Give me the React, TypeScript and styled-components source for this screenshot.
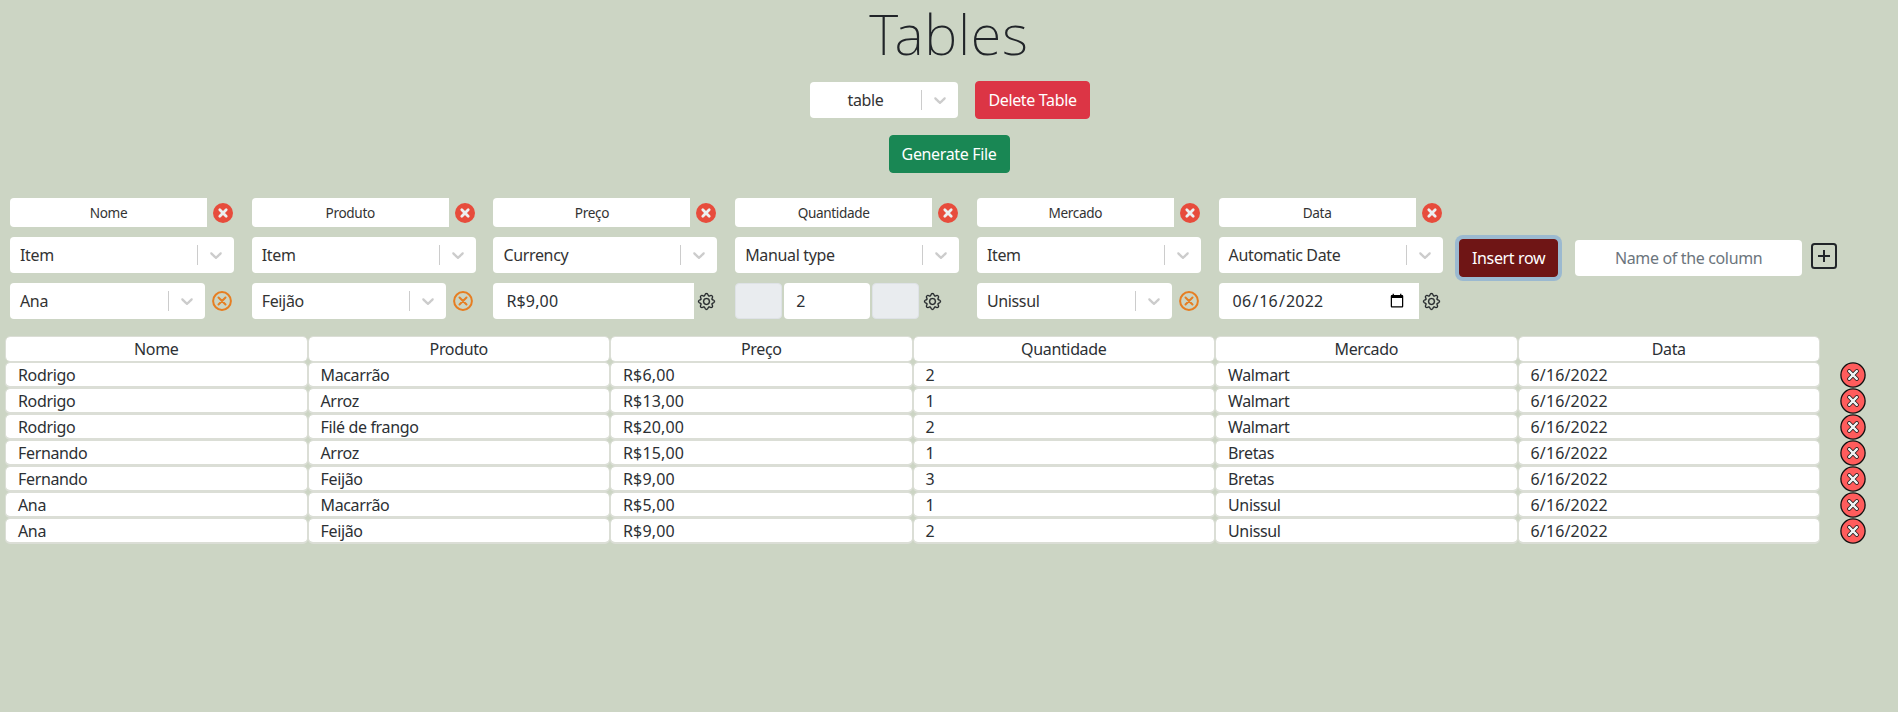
import React from "react";
import styled, { createGlobalStyle } from "styled-components";

const FONT = `"Noto Sans", "Open Sans", sans-serif`;

const Global = createGlobalStyle`
  html, body { margin: 0; padding: 0; background: #ccd5c4; }
  body { font-family: ${FONT}; color: #212529; font-size: 16px; letter-spacing: -0.35px; }
  input, button { letter-spacing: inherit; }
  * { box-sizing: border-box; }
`;

const Page = styled.div`
  width: 1898px;
  min-height: 712px;
  display: flex;
  flex-direction: column;
  background: #ccd5c4;
`;

const Title = styled.h1`
  margin: 0 0 15px;
  font-size: 56px;
  line-height: 66px;
  font-weight: 200;
  letter-spacing: 0.7px;
  text-align: center;
`;

const TopRow = styled.div`
  display: flex;
  justify-content: center;
  align-items: center;
  gap: 17px;
  height: 38px;
  padding-left: 2px;
`;

const GenerateRow = styled.div`
  display: flex;
  justify-content: center;
  margin-top: 16px;
`;

const Button = styled.button<{ $bg: string; $w: number }>`
  width: ${(p) => p.$w}px;
  height: 38px;
  padding: 0;
  border: 1px solid ${(p) => p.$bg};
  border-radius: 4px;
  background: ${(p) => p.$bg};
  color: #fff;
  font-family: ${FONT};
  font-size: 16px;
`;

const InsertButton = styled(Button)`
  margin-top: 2px;
  box-shadow: 0 0 0 4px #9bb9d0;
`;

const Builder = styled.div`
  display: flex;
  gap: 17.72px;
  margin-top: 25px;
  padding-left: 10px;
`;

const Column = styled.div`
  flex: 0 0 224px;
  display: flex;
  flex-direction: column;
  gap: 10px;
`;

const NameLine = styled.div`
  height: 29px;
  display: flex;
  align-items: center;
`;

const FieldLine = styled.div`
  height: 36px;
  display: flex;
  align-items: center;
`;

const NameInput = styled.input`
  width: 197px;
  height: 29px;
  flex: none;
  border: 0;
  outline: 0;
  border-radius: 4px 0 0 4px;
  background: #fff;
  color: #333;
  text-align: center;
  font-family: ${FONT};
  font-size: 13.6px;
`;

const SelectBox = styled.div<{ $w: number }>`
  width: ${(p) => p.$w}px;
  height: 36px;
  flex: none;
  display: flex;
  align-items: center;
  background: #fff;
  border-radius: 4px;
  color: #333;
  font-size: 16px;
`;

const SelectValue = styled.div<{ $center?: boolean }>`
  flex: 1;
  min-width: 0;
  padding-left: ${(p) => (p.$center ? 0 : 10)}px;
  text-align: ${(p) => (p.$center ? "center" : "left")};
  white-space: nowrap;
`;

const SelectSep = styled.span`
  width: 1px;
  height: 20px;
  background: #ccc;
  flex: none;
`;

const SelectArrow = styled.span`
  width: 36px;
  display: flex;
  align-items: center;
  justify-content: center;
  color: #ccc;
  flex: none;
`;

const TextInput = styled.input<{ $w: number }>`
  width: ${(p) => p.$w}px;
  height: 36px;
  flex: none;
  border: 0;
  outline: 0;
  background: #fff;
  border-radius: 4px 0 0 4px;
  padding: 0 12px 0 13px;
  color: #2c3034;
  font-family: ${FONT};
  font-size: 16px;
  letter-spacing: 0.15px;
`;

const StepButton = styled.span`
  width: 47px;
  height: 36px;
  flex: none;
  background: #e9ecef;
  border: 1px solid #dee2e6;
  border-radius: 4px;
`;

const StepInput = styled.input`
  width: 86px;
  height: 36px;
  flex: none;
  margin: 0 2px;
  border: 0;
  outline: 0;
  border-radius: 4px;
  background: #fff;
  padding: 0 12px;
  color: #2c3034;
  font-family: ${FONT};
  font-size: 16px;
`;

const IconSlot = styled.span<{ $left: number }>`
  margin-left: ${(p) => p.$left}px;
  display: flex;
  flex: none;
`;

const NewColumn = styled.div`
  display: flex;
  align-items: flex-start;
  margin-top: 39px;
  margin-left: -1.2px;
`;

const ColumnNameInput = styled.input`
  width: 227px;
  height: 36px;
  margin: 3px 0 0 17px;
  border: 0;
  outline: 0;
  border-radius: 4px;
  background: #fff;
  text-align: center;
  font-family: ${FONT};
  font-size: 16px;
  &::placeholder { color: #6c757d; opacity: 1; }
`;

const PlusSlot = styled.span`
  margin: 6px 0 0 9px;
  display: flex;
`;

const TableArea = styled.div`
  display: flex;
  margin-top: 17px;
  padding-left: 5px;
`;

const Table = styled.div`
  width: 1815px;
  display: grid;
  grid-template-columns: repeat(6, 1fr);
`;

const Cell = styled.div<{ $head?: boolean; $numeric?: boolean }>`
  height: 26px;
  background: #fff;
  background-clip: padding-box;
  border-style: solid;
  border-color: #dbded6;
  border-width: 1px 1px ${(p) => (p.$head ? 1 : 2)}px 1px;
  border-radius: 5px;
  padding: 0 ${(p) => (p.$head ? 0 : 12)}px;
  font-size: 16px;
  line-height: ${(p) => (p.$head ? 25 : 24)}px;
  letter-spacing: ${(p) => (p.$numeric ? "0.15px" : "inherit")};
  text-align: ${(p) => (p.$head ? "center" : "left")};
  color: #2c3034;
  white-space: nowrap;
`;

const DeleteColumn = styled.div`
  display: flex;
  flex-direction: column;
  margin: 26px 0 0 20px;
`;

const DeleteSlot = styled.span`
  display: block;
  width: 26px;
  height: 26px;
`;

const Chevron = () => (
  <svg width="20" height="20" viewBox="0 0 20 20" fill="currentColor" aria-hidden="true">
    <path d="M4.516 7.548c.436-.446 1.043-.481 1.576 0L10 11.295l3.908-3.747c.533-.481 1.141-.446 1.574 0 .436.445.408 1.197 0 1.615-.406.418-4.695 4.502-4.695 4.502a1.095 1.095 0 0 1-1.576 0S4.924 9.581 4.516 9.163c-.409-.418-.436-1.17 0-1.615z" />
  </svg>
);

const RedX = () => (
  <svg width="20" height="20" viewBox="0 0 20 20" aria-hidden="true">
    <circle cx="10" cy="10" r="10" fill="#e74c3c" />
    <path d="M6.8 6.8l6.4 6.4M13.2 6.8l-6.4 6.4" stroke="#ecf0f1" strokeWidth="2.8" strokeLinecap="round" />
  </svg>
);

const OrangeX = () => (
  <svg width="20" height="20" viewBox="0 0 20 20" fill="none" aria-hidden="true">
    <circle cx="10" cy="10" r="8.9" stroke="#e67e22" strokeWidth="2" />
    <path d="M6.5 6.5l7 7M13.5 6.5l-7 7" stroke="#e67e22" strokeWidth="2" strokeLinecap="round" />
  </svg>
);

const Gear = () => (
  <svg width="17" height="17" viewBox="0 0 16 16" fill="#212529" stroke="#212529" strokeWidth="0.25" overflow="visible" aria-hidden="true">
    <path d="M8 4.754a3.246 3.246 0 1 0 0 6.492 3.246 3.246 0 0 0 0-6.492zM5.754 8a2.246 2.246 0 1 1 4.492 0 2.246 2.246 0 0 1-4.492 0z" />
    <path d="M9.796 1.343c-.527-1.79-3.065-1.79-3.592 0l-.094.319a.873.873 0 0 1-1.255.52l-.292-.16c-1.64-.892-3.433.902-2.54 2.541l.159.292a.873.873 0 0 1-.52 1.255l-.319.094c-1.79.527-1.79 3.065 0 3.592l.319.094a.873.873 0 0 1 .52 1.255l-.16.292c-.892 1.64.901 3.434 2.541 2.54l.292-.159a.873.873 0 0 1 1.255.52l.094.319c.527 1.79 3.065 1.79 3.592 0l.094-.319a.873.873 0 0 1 1.255-.52l.292.16c1.64.893 3.434-.902 2.54-2.541l-.159-.292a.873.873 0 0 1 .52-1.255l.319-.094c1.79-.527 1.79-3.065 0-3.592l-.319-.094a.873.873 0 0 1-.52-1.255l.16-.292c.893-1.64-.902-3.433-2.541-2.54l-.292.159a.873.873 0 0 1-1.255-.52l-.094-.319zm-2.633.283c.246-.835 1.428-.835 1.674 0l.094.319a1.873 1.873 0 0 0 2.693 1.115l.291-.16c.764-.415 1.6.42 1.184 1.185l-.159.292a1.873 1.873 0 0 0 1.116 2.692l.318.094c.835.246.835 1.428 0 1.674l-.319.094a1.873 1.873 0 0 0-1.115 2.693l.16.291c.415.764-.42 1.6-1.185 1.184l-.291-.159a1.873 1.873 0 0 0-2.693 1.116l-.094.318c-.246.835-1.428.835-1.674 0l-.094-.319a1.873 1.873 0 0 0-2.692-1.115l-.292.16c-.764.415-1.6-.42-1.184-1.185l.159-.291A1.873 1.873 0 0 0 1.945 8.93l-.319-.094c-.835-.246-.835-1.428 0-1.674l.319-.094A1.873 1.873 0 0 0 3.06 4.377l-.16-.292c-.415-.764.42-1.6 1.185-1.184l.292.159a1.873 1.873 0 0 0 2.692-1.115l.094-.319z" />
  </svg>
);

const PlusSquare = () => (
  <svg width="26" height="26" viewBox="0 0 26 26" fill="none" aria-hidden="true">
    <rect x="1" y="1" width="24" height="24" rx="2.5" stroke="#212529" strokeWidth="2" />
    <path d="M13 7v12M7 13h12" stroke="#212529" strokeWidth="2" />
  </svg>
);

const RowDelete = () => (
  <svg width="26" height="26" viewBox="0 0 26 26" aria-hidden="true">
    <circle cx="13" cy="13" r="12.1" fill="#ff5c5c" stroke="#111" strokeWidth="1.3" />
    <path d="M9.2 9.2l7.6 7.6M16.8 9.2l-7.6 7.6" stroke="#111" strokeWidth="4" strokeLinecap="round" />
    <path d="M9.2 9.2l7.6 7.6M16.8 9.2l-7.6 7.6" stroke="#eef2f2" strokeWidth="2.5" strokeLinecap="round" />
  </svg>
);

const Select = ({ w, label, center }: { w: number; label: string; center?: boolean }) => (
  <SelectBox $w={w}>
    <SelectValue $center={center}>{label}</SelectValue>
    <SelectSep />
    <SelectArrow>
      <Chevron />
    </SelectArrow>
  </SelectBox>
);

const columns = ["Nome", "Produto", "Preço", "Quantidade", "Mercado", "Data"];

const rows = [
  ["Rodrigo", "Macarrão", "R$6,00", "2", "Walmart", "6/16/2022"],
  ["Rodrigo", "Arroz", "R$13,00", "1", "Walmart", "6/16/2022"],
  ["Rodrigo", "Filé de frango", "R$20,00", "2", "Walmart", "6/16/2022"],
  ["Fernando", "Arroz", "R$15,00", "1", "Bretas", "6/16/2022"],
  ["Fernando", "Feijão", "R$9,00", "3", "Bretas", "6/16/2022"],
  ["Ana", "Macarrão", "R$5,00", "1", "Unissul", "6/16/2022"],
  ["Ana", "Feijão", "R$9,00", "2", "Unissul", "6/16/2022"],
];

const types = ["Item", "Item", "Currency", "Manual type", "Item", "Automatic Date"];

const isNumeric = (v: string) => /\d/.test(v);

const fields: React.ReactNode[] = [
  <>
    <Select w={195} label="Ana" />
    <IconSlot $left={7}><OrangeX /></IconSlot>
  </>,
  <>
    <Select w={194} label="Feijão" />
    <IconSlot $left={7}><OrangeX /></IconSlot>
  </>,
  <>
    <TextInput $w={201} defaultValue="R$9,00" />
    <IconSlot $left={4}><Gear /></IconSlot>
  </>,
  <>
    <StepButton />
    <StepInput defaultValue="2" />
    <StepButton />
    <IconSlot $left={5}><Gear /></IconSlot>
  </>,
  <>
    <Select w={195} label="Unissul" />
    <IconSlot $left={7}><OrangeX /></IconSlot>
  </>,
  <>
    <TextInput $w={200} type="date" defaultValue="2022-06-16" />
    <IconSlot $left={4}><Gear /></IconSlot>
  </>,
];

export default function App() {
  return (
    <Page>
      <Global />
      <Title>Tables</Title>
      <TopRow>
        <Select w={148} label="table" center />
        <Button $bg="#dc3545" $w={115}>Delete Table</Button>
      </TopRow>
      <GenerateRow>
        <Button $bg="#198754" $w={121}>Generate File</Button>
      </GenerateRow>
      <Builder>
        {columns.map((name, i) => (
          <Column key={name}>
            <NameLine>
              <NameInput defaultValue={name} />
              <IconSlot $left={6}><RedX /></IconSlot>
            </NameLine>
            <FieldLine>
              <Select w={224} label={types[i]} />
            </FieldLine>
            <FieldLine>{fields[i]}</FieldLine>
          </Column>
        ))}
        <NewColumn>
          <InsertButton $bg="#6f1515" $w={99}>Insert row</InsertButton>
          <ColumnNameInput placeholder="Name of the column" />
          <PlusSlot><PlusSquare /></PlusSlot>
        </NewColumn>
      </Builder>
      <TableArea>
        <Table>
          {columns.map((c) => (
            <Cell $head key={c}>{c}</Cell>
          ))}
          {rows.map((r, i) =>
            r.map((v, j) => <Cell key={`${i}-${j}`} $numeric={isNumeric(v)}>{v}</Cell>)
          )}
        </Table>
        <DeleteColumn>
          {rows.map((_, i) => (
            <DeleteSlot key={i}><RowDelete /></DeleteSlot>
          ))}
        </DeleteColumn>
      </TableArea>
    </Page>
  );
}
